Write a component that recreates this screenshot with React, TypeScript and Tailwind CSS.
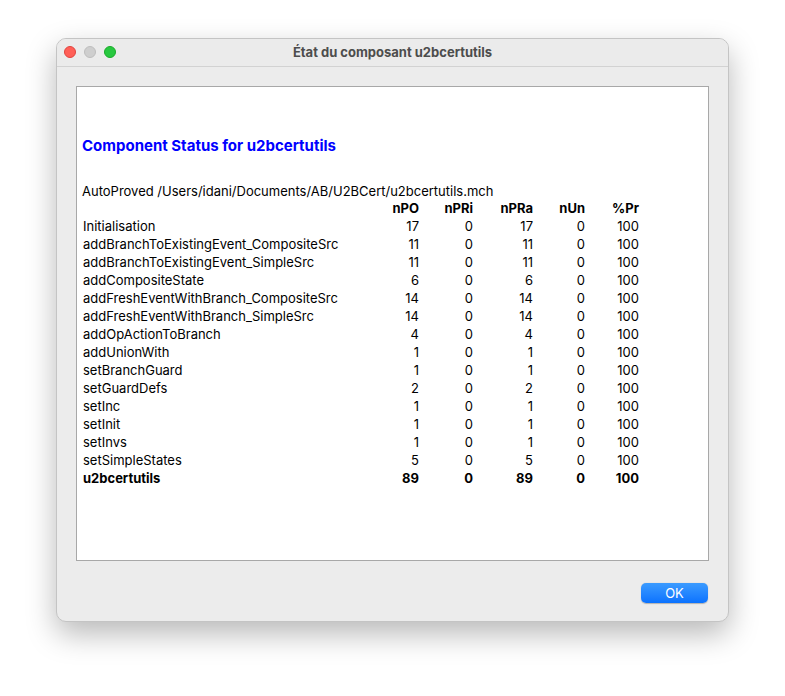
import React from 'react';

interface Row {
  name: string;
  npo: number;
  npri: number;
  npra: number;
  nun: number;
  pr: number;
}

const rows: Row[] = [
  { name: 'Initialisation', npo: 17, npri: 0, npra: 17, nun: 0, pr: 100 },
  { name: 'addBranchToExistingEvent_CompositeSrc', npo: 11, npri: 0, npra: 11, nun: 0, pr: 100 },
  { name: 'addBranchToExistingEvent_SimpleSrc', npo: 11, npri: 0, npra: 11, nun: 0, pr: 100 },
  { name: 'addCompositeState', npo: 6, npri: 0, npra: 6, nun: 0, pr: 100 },
  { name: 'addFreshEventWithBranch_CompositeSrc', npo: 14, npri: 0, npra: 14, nun: 0, pr: 100 },
  { name: 'addFreshEventWithBranch_SimpleSrc', npo: 14, npri: 0, npra: 14, nun: 0, pr: 100 },
  { name: 'addOpActionToBranch', npo: 4, npri: 0, npra: 4, nun: 0, pr: 100 },
  { name: 'addUnionWith', npo: 1, npri: 0, npra: 1, nun: 0, pr: 100 },
  { name: 'setBranchGuard', npo: 1, npri: 0, npra: 1, nun: 0, pr: 100 },
  { name: 'setGuardDefs', npo: 2, npri: 0, npra: 2, nun: 0, pr: 100 },
  { name: 'setInc', npo: 1, npri: 0, npra: 1, nun: 0, pr: 100 },
  { name: 'setInit', npo: 1, npri: 0, npra: 1, nun: 0, pr: 100 },
  { name: 'setInvs', npo: 1, npri: 0, npra: 1, nun: 0, pr: 100 },
  { name: 'setSimpleStates', npo: 5, npri: 0, npra: 5, nun: 0, pr: 100 },
];

const total: Row = { name: 'u2bcertutils', npo: 89, npri: 0, npra: 89, nun: 0, pr: 100 };

function TableRow({ cells, bold }: { cells: (string | number)[]; bold?: boolean }) {
  return (
    <div className={`flex h-[18px] items-center ${bold ? 'font-bold' : ''}`}>
      <div className="w-[287px] pl-px">{cells[0]}</div>
      <div className="w-[50px] text-right">{cells[1]}</div>
      <div className="w-[54px] text-right">{cells[2]}</div>
      <div className="w-[60px] text-right">{cells[3]}</div>
      <div className="w-[52px] text-right">{cells[4]}</div>
      <div className="w-[54px] text-right">{cells[5]}</div>
    </div>
  );
}

export default function App() {
  return (
    <div className="h-[696px] w-[785px] bg-white pl-[56px] pt-[38px] font-['Inter','Liberation_Sans',Arial,sans-serif]">
      <div className="flex h-[584px] w-[673px] flex-col overflow-hidden rounded-[10px] border border-[#c4c4c4] bg-[#ececec] shadow-[0_12px_30px_rgba(0,0,0,0.28)]">
        {/* Title bar */}
        <div className="relative flex h-[28px] shrink-0 items-center justify-center border-b border-[#d2d2d2] bg-[#ebebeb]">
          <div className="absolute left-[7px] top-[7px] flex gap-[8px]">
            <span className="h-[12px] w-[12px] rounded-full border border-[#e0443e] bg-[#ff5f57]" />
            <span className="h-[12px] w-[12px] rounded-full border border-[#bdbdbd] bg-[#cecece]" />
            <span className="h-[12px] w-[12px] rounded-full border border-[#1aab29] bg-[#28c840]" />
          </div>
          <span className="text-[13px] font-bold text-[#4d4d4d]">État du composant u2bcertutils</span>
        </div>

        {/* Content */}
        <div className="flex flex-1 flex-col px-[19px] pt-[19px]">
          <div className="h-[475px] w-[633px] border border-[#a8a8a8] bg-white pl-[5px] text-[13px] text-black">
            <div className="pt-[50px] text-[15px] font-bold leading-[18px] text-[#0000ff]">
              Component Status for u2bcertutils
            </div>
            <div className="mt-[27px] h-[18px] leading-[18px]">
              AutoProved /Users/idani/Documents/AB/U2BCert/u2bcertutils.mch
            </div>
            <TableRow cells={['', 'nPO', 'nPRi', 'nPRa', 'nUn', '%Pr']} bold />
            {rows.map(r => (
              <TableRow key={r.name} cells={[r.name, r.npo, r.npri, r.npra, r.nun, r.pr]} />
            ))}
            <TableRow cells={[total.name, total.npo, total.npri, total.npra, total.nun, total.pr]} bold />
          </div>
          <div className="mt-[22px] flex justify-end pr-px">
            <button className="h-[20px] w-[67px] rounded-[5px] bg-gradient-to-b from-[#3b9bff] to-[#0a72ff] text-[13px] leading-[20px] text-white shadow-[0_0.5px_1px_rgba(0,0,0,0.25)]">
              OK
            </button>
          </div>
        </div>
      </div>
    </div>
  );
}
